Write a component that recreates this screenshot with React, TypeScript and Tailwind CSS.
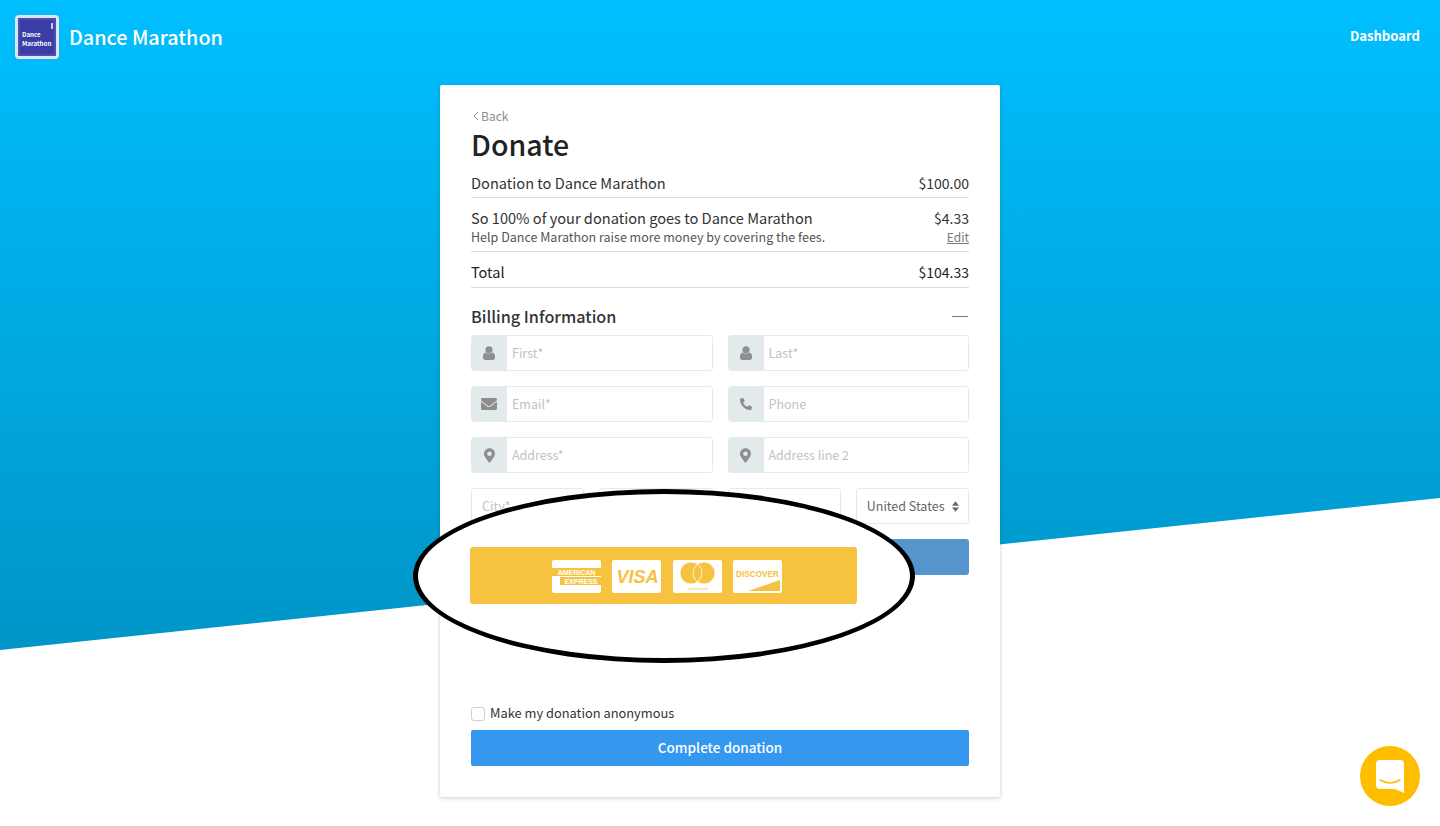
import React from 'react';
import { FaEnvelope, FaPhoneAlt, FaMapMarkerAlt } from 'react-icons/fa';

const FONT = 'font-["Noto_Sans_CJK_SC","Noto_Sans",sans-serif]';

function UserIcon() {
  return (
    <svg viewBox="0 0 12 14" width="12" height="14" fill="currentColor">
      <circle cx="6" cy="3.8" r="3.6" />
      <path d="M2.6 6.6 C4 8.2 8 8.2 9.4 6.6 C11 6.9 12 8.4 12 10.4 V11.6 C12 13 11 14 9.8 14 H2.2 C1 14 0 13 0 11.6 V10.4 C0 8.4 1 6.9 2.6 6.6 Z" />
    </svg>
  );
}

function Field({ icon, placeholder }: { icon?: React.ReactNode; placeholder: string }) {
  return (
    <div className="flex h-9 overflow-hidden rounded-[3px] border border-[#e4ebec] bg-white">
      {icon && (
        <div className="flex w-[35px] shrink-0 items-center justify-center bg-[#e3eaeb] pr-px text-[#8e8e8e]">
          {icon}
        </div>
      )}
      <span className="flex items-center pl-[5px] text-[12.5px] text-[#c2c2c2]">{placeholder}</span>
    </div>
  );
}

function CardLogo({ children }: { children: React.ReactNode }) {
  return (
    <div className="h-[33px] w-[49px] overflow-hidden rounded-[2px] bg-white">
      <svg viewBox="0 0 49 33" width="49" height="33">{children}</svg>
    </div>
  );
}

function CardLogos() {
  const yellow = '#f6c240';
  return (
    <div className="flex items-center gap-[11.5px] pl-[8px] pt-[2px]">
      <CardLogo>
        <rect x="0" y="8" width="49" height="8" fill={yellow} />
        <rect x="8" y="17" width="41" height="8" fill={yellow} />
        <text x="24.5" y="14.5" fontSize="7" fontWeight="700" textAnchor="middle" fill="#fff" fontFamily="Liberation Sans">AMERICAN</text>
        <text x="29" y="23.5" fontSize="7" fontWeight="700" textAnchor="middle" fill="#fff" fontFamily="Liberation Sans">EXPRESS</text>
      </CardLogo>
      <CardLogo>
        <text x="25.5" y="23" fontSize="18" fontWeight="700" fontStyle="italic" textAnchor="middle" fill={yellow} fontFamily="Liberation Sans">VISA</text>
      </CardLogo>
      <CardLogo>
        <circle cx="18" cy="13" r="11" fill={yellow} />
        <circle cx="31" cy="13" r="11" fill={yellow} />
        <circle cx="18" cy="13" r="11" fill="none" stroke="#fff" strokeWidth="0.8" />
        <circle cx="31" cy="13" r="11" fill="none" stroke="#fff" strokeWidth="0.8" />
        <text x="24.5" y="30" fontSize="4" textAnchor="middle" fill={yellow} fontFamily="Liberation Sans">mastercard</text>
      </CardLogo>
      <CardLogo>
        <text x="24.5" y="17" fontSize="8.2" fontWeight="700" textAnchor="middle" fill={yellow} fontFamily="Liberation Sans">DISCOVER</text>
        <path d="M15 31 L47 20 L47 31 Z" fill={yellow} />
      </CardLogo>
    </div>
  );
}

function App() {
  return (
    <div className={`relative h-[826px] overflow-hidden bg-white ${FONT}`}>
      {/* slanted blue backdrop */}
      <div className="absolute inset-x-0 top-0 h-[650px] bg-gradient-to-b from-[#00bfff] to-[#0095c7] [clip-path:polygon(0_0,100%_0,100%_498px,0_650px)]" />

      <header className="relative flex h-[85px] items-start justify-between px-[15px] pt-[15px]">
        <div className="flex items-center gap-[10px]">
          <div className="flex h-[44px] w-[44px] items-center justify-center rounded-[4px] bg-[#dfe3f3] p-[3px]">
            <div className="relative flex h-full w-full flex-col items-start justify-center border-2 border-[#4a4fb0] bg-[#3a3da6] pl-[2px] text-[6.2px] font-bold leading-[9px] text-white">
              <span className="mt-[3px]">Dance</span>
              <span>Marathon</span>
              <span className="absolute right-[1px] top-[3px] h-[6px] w-[2px] bg-[#c9cbef]" />
            </div>
          </div>
          <span className="text-[19.8px] font-medium leading-[44px] text-white">Dance Marathon</span>
        </div>
        <a className="mr-[5px] mt-[9px] text-[13.1px] font-bold leading-[24px] text-white">Dashboard</a>
      </header>

      <main className="relative mx-auto h-[712px] w-[560px] rounded-[2px] bg-white px-[31px] pt-[23px] shadow-[0_1px_4px_rgba(0,0,0,0.2)]">
        <div className="flex h-4 items-center gap-[2px] pl-[2px] text-[12px] text-[#8c8c8c]">
          <svg viewBox="0 0 6 10" width="6" height="10" fill="none" stroke="#8c8c8c" strokeWidth="1">
            <path d="M5 1 L1 5 L5 9" />
          </svg>
          <span>Back</span>
        </div>
        <h1 className="h-[41px] text-[28.5px] font-medium leading-[39px] text-[#222]">Donate</h1>

        <div className="flex h-[33px] items-center justify-between border-b border-[#dcdcdc] pt-[4px] text-[14.6px] text-[#333]">
          <span>Donation to Dance Marathon</span>
          <span className="text-[14px]">$100.00</span>
        </div>
        <div className="flex h-[54px] justify-between border-b border-[#dcdcdc] pt-[10px] text-[#333]">
          <div>
            <div className="text-[14.6px] leading-[20px]">So 100% of your donation goes to Dance Marathon</div>
            <div className="text-[12.5px] leading-[18px] text-[#555]">Help Dance Marathon raise more money by covering the fees.</div>
          </div>
          <div className="text-right">
            <div className="text-[14px] leading-[20px]">$4.33</div>
            <div className="text-[12px] leading-[18px] text-[#777] underline">Edit</div>
          </div>
        </div>
        <div className="flex h-9 items-center justify-between border-b border-[#dcdcdc] pt-[5px] text-[14.5px] text-[#222]">
          <span>Total</span>
          <span className="text-[14px]">$104.33</span>
        </div>

        <div className="flex h-[47px] items-center justify-between pt-[9px]">
          <h2 className="text-[16.2px] font-medium text-[#333]">Billing Information</h2>
          <div className="mr-px h-px w-4 bg-[#777]" />
        </div>

        <div className="grid grid-cols-2 gap-x-[15px] gap-y-[15px]">
          <Field icon={<UserIcon />} placeholder="First*" />
          <Field icon={<UserIcon />} placeholder="Last*" />
          <Field icon={<FaEnvelope className="h-[16px] w-[16px]" />} placeholder="Email*" />
          <Field icon={<FaPhoneAlt className="h-[12px] w-[12px]" />} placeholder="Phone" />
          <Field icon={<FaMapMarkerAlt className="h-[15px] w-[11px]" />} placeholder="Address*" />
          <Field icon={<FaMapMarkerAlt className="h-[15px] w-[11px]" />} placeholder="Address line 2" />
        </div>

        <div className="mt-[15px] grid grid-cols-4 gap-x-[15px]">
          <div className="h-9 rounded-[3px] border border-[#e4ebec] pl-[10px] text-[12.5px] leading-[34px] text-[#c2c2c2]">City*</div>
          <div className="h-9 rounded-[3px] border border-[#e4ebec]" />
          <div className="h-9 rounded-[3px] border border-[#e4ebec]" />
          <div className="flex h-9 items-center justify-between whitespace-nowrap rounded-[3px] border border-[#e4ebec] pl-[10px] pr-[9px] text-[12.5px] text-[#666]">
            <span>United States</span>
            <svg viewBox="0 0 8 12" width="7" height="11" fill="#666">
              <path d="M4 0 L8 5 L0 5 Z M4 12 L0 7 L8 7 Z" />
            </svg>
          </div>
        </div>

        <div className="mt-[15px] h-9 rounded-[3px] bg-[#5594cc]" />

        <label className="mt-[130px] flex h-[18px] items-center gap-[5px] text-[12.85px] text-[#333]">
          <span className="h-[14px] w-[14px] rounded-[3px] border border-[#cfcfcf] bg-white" />
          <span className="mt-[-2px]">Make my donation anonymous</span>
        </label>
        <button className="mt-[7px] h-9 w-full rounded-[2px] bg-[#3498ee] pb-[2px] text-[13.5px] font-medium text-white">
          Complete donation
        </button>
      </main>

      {/* black marker ellipse drawn over the form */}
      <div className="absolute left-[413px] top-[489px] flex h-[174px] w-[502px] items-center justify-center rounded-[50%] border-[5px] border-black bg-white">
        <div className="mr-[2px] mt-[-1px] flex h-[57px] w-[387px] items-center justify-center rounded-[3px] bg-[#f6c240]">
          <CardLogos />
        </div>
      </div>

      <div className="absolute left-[1360px] top-[746px] flex h-[60px] w-[60px] items-center justify-center rounded-full bg-[#ffbd00]">
        <svg viewBox="0 0 28 33" width="28" height="33">
          <path d="M4 0 H24 A4 4 0 0 1 28 4 V33 L19 29 H4 A4 4 0 0 1 0 25 V4 A4 4 0 0 1 4 0 Z" fill="#fff" />
          <path d="M4 20 Q14 26 24 20" fill="none" stroke="#ffbd00" strokeWidth="1.5" strokeLinecap="round" />
        </svg>
      </div>
    </div>
  );
}

export default App;
